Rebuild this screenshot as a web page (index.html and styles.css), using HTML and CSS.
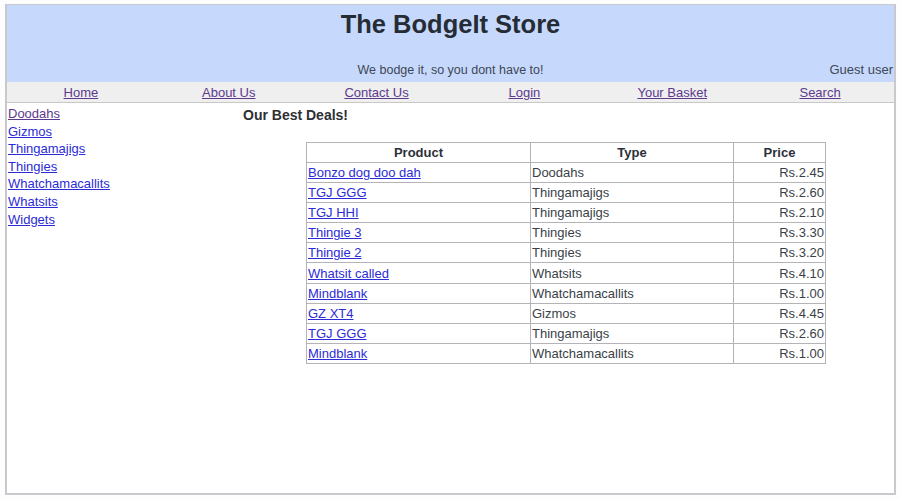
FILE: index.html
```html
<!DOCTYPE html>
<html>
<head>
<meta charset="utf-8">
<title>The BodgeIt Store</title>
<link rel="stylesheet" href="styles.css">
</head>
<body>
<div class="frame">
  <header class="header">
    <h1 class="title">The BodgeIt Store</h1>
    <div class="subrow">
      <span class="tagline">We bodge it, so you dont have to!</span>
      <span class="user">Guest user</span>
    </div>
  </header>
  <nav class="nav">
    <a class="visited" href="#">Home</a>
    <a class="visited" href="#">About Us</a>
    <a class="visited" href="#">Contact Us</a>
    <a class="visited" href="#">Login</a>
    <a class="visited" href="#">Your Basket</a>
    <a class="visited" href="#">Search</a>
  </nav>
  <div class="body">
    <aside class="side">
      <a class="visited" href="#">Doodahs</a>
      <a href="#">Gizmos</a>
      <a href="#">Thingamajigs</a>
      <a href="#">Thingies</a>
      <a href="#">Whatchamacallits</a>
      <a href="#">Whatsits</a>
      <a href="#">Widgets</a>
    </aside>
    <main class="main">
      <h3 class="deals">Our Best Deals!</h3>
      <table class="grid">
        <thead>
          <tr><th class="c-prod">Product</th><th class="c-type">Type</th><th class="c-price">Price</th></tr>
        </thead>
        <tbody>
          <tr><td><a href="#">Bonzo dog doo dah</a></td><td>Doodahs</td><td class="num">Rs.2.45</td></tr>
          <tr><td><a href="#">TGJ GGG</a></td><td>Thingamajigs</td><td class="num">Rs.2.60</td></tr>
          <tr><td><a href="#">TGJ HHI</a></td><td>Thingamajigs</td><td class="num">Rs.2.10</td></tr>
          <tr><td><a href="#">Thingie 3</a></td><td>Thingies</td><td class="num">Rs.3.30</td></tr>
          <tr><td><a href="#">Thingie 2</a></td><td>Thingies</td><td class="num">Rs.3.20</td></tr>
          <tr><td><a href="#">Whatsit called</a></td><td>Whatsits</td><td class="num">Rs.4.10</td></tr>
          <tr><td><a href="#">Mindblank</a></td><td>Whatchamacallits</td><td class="num">Rs.1.00</td></tr>
          <tr><td><a href="#">GZ XT4</a></td><td>Gizmos</td><td class="num">Rs.4.45</td></tr>
          <tr><td><a href="#">TGJ GGG</a></td><td>Thingamajigs</td><td class="num">Rs.2.60</td></tr>
          <tr><td><a href="#">Mindblank</a></td><td>Whatchamacallits</td><td class="num">Rs.1.00</td></tr>
        </tbody>
      </table>
    </main>
  </div>
</div>
</body>
</html>
```

FILE: styles.css
```css
html, body {
  margin: 0;
  padding: 0;
  background: #fdfdfe;
}
body {
  padding: 4px 4px 5px 5px;
  font-family: "Liberation Sans", Arial, sans-serif;
  color: #333a44;
  font-size: 13px;
}
.frame {
  height: 491px;
  box-sizing: border-box;
  border: 2px solid #c9c9cd;
  border-top-width: 1px;
  display: flex;
  flex-direction: column;
  background: #ffffff;
}
.header {
  background: #c6d9fc;
  height: 77px;
  display: flex;
  flex-direction: column;
  justify-content: space-between;
}
.title {
  margin: 0;
  padding-top: 3px;
  text-align: center;
  font-size: 25.5px;
  font-weight: bold;
  color: #262c35;
  line-height: 32px;
}
.subrow {
  position: relative;
  height: 18px;
  line-height: 18px;
  margin-bottom: 3px;
  text-align: center;
  color: #3f4656;
}
.tagline {
  font-size: 12.5px;
}
.user {
  position: absolute;
  right: 1px;
  top: 0;
}
.nav {
  display: grid;
  grid-template-columns: repeat(6, 1fr);
  background: #efefef;
  height: 20px;
  line-height: 21px;
  border-bottom: 1px solid #c8c8c8;
  text-align: center;
  font-size: 13px;
}
a {
  color: #2c2cd6;
}
a.visited {
  color: #5b3a8e;
}
.body {
  display: flex;
  flex: 1;
}
.side {
  width: 229px;
  padding: 2px 0 0 1px;
  display: flex;
  flex-direction: column;
  align-items: flex-start;
  line-height: 17.6px;
}
.main {
  flex: 1;
}
.deals {
  margin: 3px 0 0 6px;
  font-size: 14px;
  font-weight: bold;
  color: #2d2f33;
  line-height: 18px;
}
.grid {
  margin: 18px auto 0 69px;
  border-collapse: collapse;
  border: 1px solid #b4b4b8;
  font-size: 13px;
  color: #3a3f48;
}
.grid th, .grid td {
  border: 1px solid #b4b4b8;
  height: 19px;
  padding: 0 1px;
  line-height: 19px;
}
.grid tbody td {
  height: 19.1px;
}
.grid th {
  font-weight: bold;
  color: #2d3038;
  text-align: center;
}
.c-prod { width: 221px; }
.c-type { width: 200px; }
.c-price { width: 89px; }
.num {
  text-align: right;
}
```
